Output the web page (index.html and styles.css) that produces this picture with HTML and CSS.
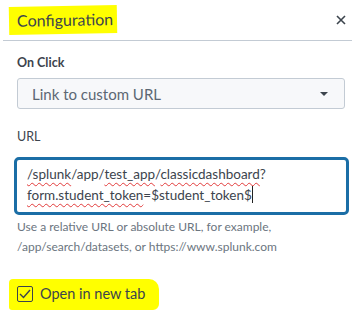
FILE: index.html
```html
<!DOCTYPE html>
<html lang="en">
<head>
    <meta charset="UTF-8">
    <meta name="viewport" content="width=device-width, initial-scale=1.0">
    <title>Configuration</title>
    <link rel="stylesheet" href="styles.css">
</head>
<body>
    <!-- Panel header -->
    <div class="header">
        <h2 class="title"><span class="mark">Configuration</span></h2>
        <button class="close" aria-label="Close">
            <svg width="10" height="10" viewBox="0 0 10 10">
                <path d="M1 1 L9 9 M9 1 L1 9" stroke="#3c444d" stroke-width="1.6" fill="none"/>
            </svg>
        </button>
    </div>

    <!-- Panel body -->
    <div class="body">
        <label class="label bold">On Click</label>
        <div class="select">
            <span>Link to custom URL</span>
            <svg width="8" height="4" viewBox="0 0 8 4"><path d="M0 0 L8 0 L4 4 Z" fill="#3c444d"/></svg>
        </div>

        <label class="label url-label">URL</label>
        <div class="textarea"><span class="typo">/splunk</span>/app/<span class="typo">test_app</span>/<span class="typo">classicdashboard</span>?<br><span class="typo">form.student_token</span>=$student_token$<span class="caret"></span></div>
        <p class="help">Use a relative URL or absolute URL, for example,<br>/app/search/datasets, or https://www.splunk.com</p>

        <div class="check-row">
            <span class="check-mark">
                <span class="box">
                    <svg width="12" height="10" viewBox="0 0 12 10"><path d="M1 5 L4.5 8.5 L11 1" stroke="#3c444d" stroke-width="1.4" fill="none"/></svg>
                </span>
                <span class="check-label">Open in new tab</span>
            </span>
        </div>
    </div>
</body>
</html>
```
FILE: styles.css
```css
body {
    font-family: Lato, "Open Sans", Arial, sans-serif;
    background-color: #ffffff;
    color: #3c444d;
    margin: 0;
    width: 352px;
    height: 310px;
    overflow: hidden;
}
.header {
    display: flex;
    justify-content: space-between;
    align-items: center;
    height: 41px;
    margin-left: 3px;
    border-bottom: 1px solid #c3cbd4;
    box-sizing: border-box;
}
.title {
    margin: 0;
    padding-left: 6px;
    font-size: 16px;
    font-weight: normal;
}
.mark {
    display: inline-block;
    background-color: #ffff00;
    padding: 4px 4px 5px 8px;
    transform: rotate(-1deg);
}
.close {
    background: none;
    border: none;
    padding: 0;
    margin-right: 6px;
    width: 10px;
    height: 10px;
    display: flex;
}
.body {
    padding: 0 7px 0 17px;
}
.label {
    display: block;
    font-size: 12.5px;
}
.bold {
    font-weight: bold;
    margin-top: 14px;
}
.select {
    margin-top: 8px;
    height: 31px;
    box-sizing: border-box;
    border: 1px solid #c3cbd4;
    border-radius: 3px;
    background-color: #f7f8fa;
    display: flex;
    align-items: center;
    justify-content: space-between;
    padding: 0 16px 0 14px;
    font-size: 15px;
    color: #5c6773;
}
.url-label {
    margin-top: 20px;
}
.textarea {
    margin-top: 13px;
    margin-left: -3px;
    margin-right: -4px;
    height: 58px;
    box-sizing: border-box;
    border: 3px solid #1b6ea6;
    border-radius: 5px;
    padding: 4px 10px;
    font-size: 13.5px;
    line-height: 21px;
    color: #3c444d;
}
.typo {
    text-decoration: underline wavy #e23b3b;
    text-decoration-thickness: 1px;
    text-underline-offset: 3px;
}
.caret {
    display: inline-block;
    width: 1px;
    height: 17px;
    background: #222;
    vertical-align: -3px;
}
.help {
    margin: 2px 0 0;
    font-size: 12px;
    line-height: 20px;
    color: #6b7580;
}
.check-row {
    margin-top: 22px;
    margin-left: -8px;
}
.check-mark {
    display: inline-flex;
    align-items: center;
    gap: 7px;
    background-color: #ffff00;
    padding: 6px 14px 8px 8px;
    border-radius: 4px 10px 6px 3px;
}
.box {
    width: 16px;
    height: 16px;
    box-sizing: border-box;
    border: 1px solid #3c444d;
    border-radius: 2px;
    display: flex;
    align-items: center;
    justify-content: center;
}
.check-label {
    font-size: 14.5px;
}
```
